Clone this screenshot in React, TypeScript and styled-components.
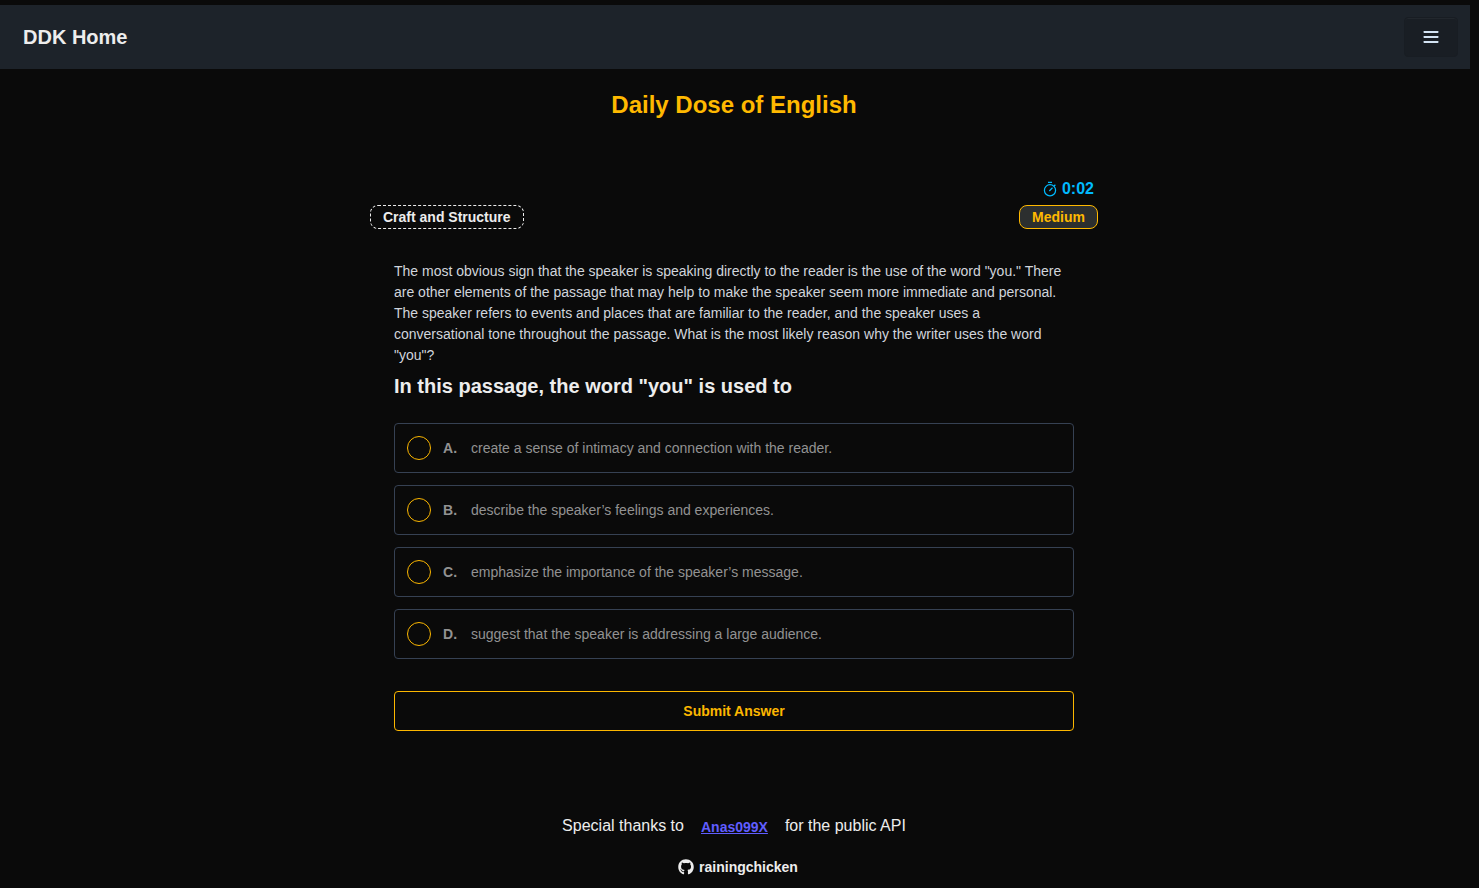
import React, { useState } from "react";
import styled, { createGlobalStyle } from "styled-components";
import { FaGithub } from "react-icons/fa";

const GlobalStyle = createGlobalStyle`
  *, *::before, *::after { box-sizing: border-box; }
  body {
    margin: 0;
    background: #0a0a0a;
    color: #ededed;
    font-family: "Liberation Sans", Arial, Helvetica, sans-serif;
    font-size: 16px;
    line-height: 24px;
  }
  h1, h2, p { margin: 0; }
  button { font-family: inherit; cursor: pointer; }
`;

const Page = styled.div`
  padding: 5px 9px 0 0;
`;

const Navbar = styled.header`
  display: flex;
  align-items: center;
  justify-content: space-between;
  min-height: 64px;
  padding: 8px 12px 8px 23px;
  background: #1d232a;
`;

const HomeLink = styled.a`
  color: #ededed;
  font-size: 20px;
  font-weight: 700;
  line-height: 28px;
  text-decoration: none;
`;

const MenuButton = styled.button`
  display: flex;
  align-items: center;
  justify-content: center;
  width: 54px;
  height: 40px;
  padding: 0;
  border: 1px solid #181d23;
  border-radius: 4px;
  background: #191e24;
  color: #d3e3f3;
  box-shadow: inset 0 1px 0 #22272d;
`;

const Main = styled.main`
  display: flex;
  flex-direction: column;
  align-items: center;
  padding-right: 2px;
`;

const Title = styled.h1`
  margin-top: 20px;
  color: #ffb900;
  font-size: 24px;
  font-weight: 700;
  line-height: 32px;
`;

const Quiz = styled.section`
  width: 100%;
  max-width: 728px;
  margin-top: 56px;
`;

const Timer = styled.div`
  display: flex;
  align-items: center;
  justify-content: flex-end;
  gap: 4px;
  padding-right: 4px;
  color: #00bafe;
  font-weight: 700;
`;

const BadgeRow = styled.div`
  display: flex;
  justify-content: space-between;
  margin-top: 4px;
`;

const Badge = styled.span<{ $level?: boolean }>`
  display: inline-flex;
  align-items: center;
  height: 24px;
  padding: 0 12px;
  border: 1px ${(p) => (p.$level ? "solid #ffb900" : "dashed #ededed")};
  border-radius: 8px;
  background: ${(p) => (p.$level ? "#2c2f2f" : "transparent")};
  color: ${(p) => (p.$level ? "#ffb900" : "#ededed")};
  font-size: 14px;
  font-weight: 700;
`;

const QuestionForm = styled.form`
  padding: 32px 24px 0;
`;

const Passage = styled.p`
  color: #d1d5dc;
  font-size: 14px;
  line-height: 21px;
`;

const Question = styled.h2`
  margin-top: 6px;
  font-size: 20px;
  font-weight: 700;
  line-height: 28px;
`;

const Options = styled.div`
  display: flex;
  flex-direction: column;
  gap: 12px;
  margin-top: 23px;
`;

const Option = styled.label`
  display: flex;
  align-items: center;
  min-height: 50px;
  padding: 12px;
  border: 1px solid #364153;
  border-radius: 4px;
  color: #929292;
  font-size: 14px;
  cursor: pointer;
`;

const Radio = styled.input`
  appearance: none;
  flex: none;
  width: 24px;
  height: 24px;
  margin: 0 12px 0 0;
  border: 1px solid #fcb700;
  border-radius: 50%;
  &:checked {
    background: #fcb700;
    box-shadow: inset 0 0 0 4px #0a0a0a;
  }
`;

const Letter = styled.span`
  width: 28px;
  font-weight: 700;
`;

const SubmitButton = styled.button`
  display: block;
  width: 100%;
  height: 40px;
  margin-top: 32px;
  border: 1px solid #fcb700;
  border-radius: 4px;
  background: transparent;
  color: #fcb700;
  font-size: 14px;
  font-weight: 700;
`;

const Footer = styled.footer`
  display: flex;
  flex-direction: column;
  align-items: center;
  gap: 18px;
  margin-top: 82px;
  padding-bottom: 8px;
`;

const Thanks = styled.p`
  display: flex;
  align-items: center;
  gap: 17px;
`;

const ApiLink = styled.a`
  padding-top: 2px;
  color: #605dff;
  font-size: 14px;
  font-weight: 700;
`;

const AuthorLink = styled.a`
  display: flex;
  align-items: center;
  gap: 5px;
  padding-left: 8px;
  color: #ededed;
  font-size: 14px;
  font-weight: 700;
  line-height: 20px;
  text-decoration: none;
`;

const StopwatchIcon = () => (
  <svg width="16" height="16" viewBox="0 0 16 16" fill="none" stroke="currentColor" strokeWidth="1.25" aria-hidden="true">
    <circle cx="8" cy="9.3" r="5.6" />
    <path d="M6 1.3h4M11.8 5.3l1.6-1.6M7.3 10l3.2-3.2" />
  </svg>
);

const answers = [
  "create a sense of intimacy and connection with the reader.",
  "describe the speaker’s feelings and experiences.",
  "emphasize the importance of the speaker’s message.",
  "suggest that the speaker is addressing a large audience.",
];

export default function App() {
  const [choice, setChoice] = useState<number | null>(null);

  return (
    <Page>
      <GlobalStyle />
      <Navbar>
        <HomeLink href="#">DDK Home</HomeLink>
        <MenuButton type="button" aria-label="Open menu">
          <svg width="16" height="12" viewBox="0 0 16 12" fill="currentColor" aria-hidden="true">
            <rect x="0.6" y="0" width="14.8" height="2" rx="0.4" />
            <rect x="0.6" y="5" width="14.8" height="2" rx="0.4" />
            <rect x="0.6" y="10" width="14.8" height="2" rx="0.4" />
          </svg>
        </MenuButton>
      </Navbar>
      <Main>
        <Title>Daily Dose of English</Title>
        <Quiz>
          <Timer>
            <StopwatchIcon />
            <span>0:02</span>
          </Timer>
          <BadgeRow>
            <Badge>Craft and Structure</Badge>
            <Badge $level>Medium</Badge>
          </BadgeRow>
          <QuestionForm onSubmit={(e) => e.preventDefault()}>
            <Passage>
              The most obvious sign that the speaker is speaking directly to the reader is the use of the
              word "you." There are other elements of the passage that may help to make the speaker seem
              more immediate and personal. The speaker refers to events and places that are familiar to
              the reader, and the speaker uses a conversational tone throughout the passage. What is the
              most likely reason why the writer uses the word "you"?
            </Passage>
            <Question>In this passage, the word "you" is used to</Question>
            <Options role="radiogroup" aria-label="Answers">
              {answers.map((answer, i) => (
                <Option key={answer}>
                  <Radio type="radio" name="answer" checked={choice === i} onChange={() => setChoice(i)} />
                  <Letter>{"ABCD"[i]}.</Letter>
                  <span>{answer}</span>
                </Option>
              ))}
            </Options>
            <SubmitButton type="submit">Submit Answer</SubmitButton>
          </QuestionForm>
        </Quiz>
        <Footer>
          <Thanks>
            <span>Special thanks to</span>
            <ApiLink href="#">Anas099X</ApiLink>
            <span>for the public API</span>
          </Thanks>
          <AuthorLink href="#">
            <FaGithub size={16} />
            rainingchicken
          </AuthorLink>
        </Footer>
      </Main>
    </Page>
  );
}
